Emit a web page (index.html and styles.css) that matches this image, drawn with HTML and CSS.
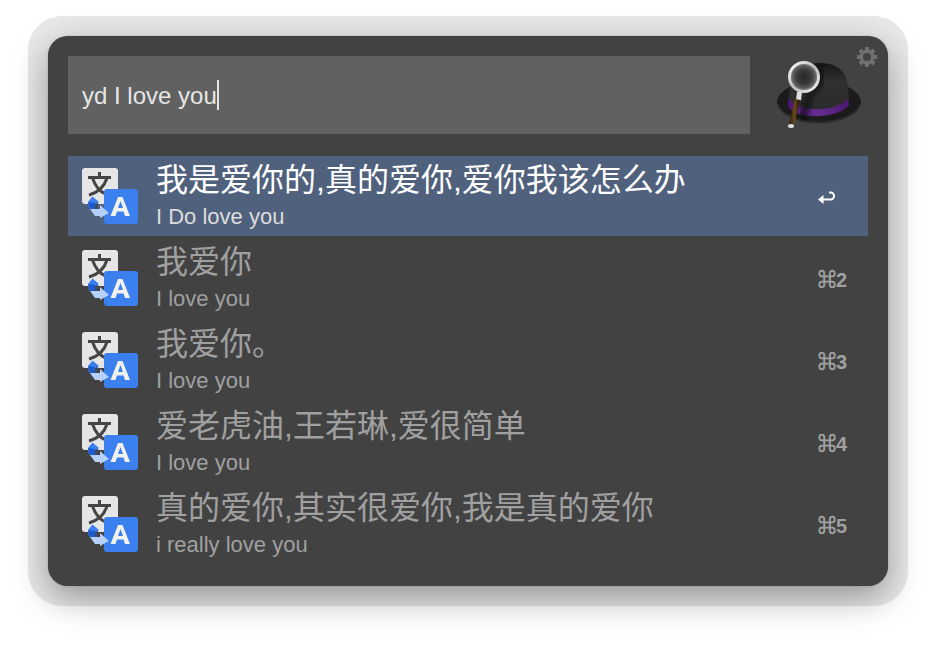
FILE: index.html
```html
<!DOCTYPE html>
<html lang="zh-CN">
<head>
<meta charset="utf-8">
<title>Alfred</title>
<link rel="stylesheet" href="styles.css">
</head>
<body>
<svg class="defs" aria-hidden="true">
  <symbol id="translate" viewBox="0 0 56 56">
    <rect width="36" height="36" rx="3" fill="#e6e6e6"/>
    <path d="M17.500 4v5M6 9.500h23M10.500 10q4 12 13 16M25 10q-4 13-18 17" fill="none" stroke="#454545" stroke-width="3"/>
    <path d="M7 33h9v8h-8z" fill="#414b5c"/>
    <path d="M10.500 28.500L17 34l-3 2-3-1-4 6-1-7z" fill="#3b80ee"/>
    <path d="M6 34l7 1v6H8z" fill="#1b5bd2"/>
    <rect x="22" y="21" width="34" height="35" rx="3" fill="#3b80ee"/>
    <path d="M8 41h10v-4l9 8-9 5v-2h-5z" fill="#b5d0fb"/>
    <path d="M28.500 48l7.500-19h4.500L48 48h-5l-1.500-4.500h-6.500L33.500 48zM36 40h5l-2.500-7z" fill="#f1f1ee" fill-rule="evenodd"/>
  </symbol>
</svg>
<main class="frame">
  <div class="panel">
    <header class="top">
      <label class="search">
        <input class="query" type="text" value="yd I love you" aria-label="Search" spellcheck="false">
        <span class="caret"></span>
      </label>
      <div class="brand">
        <svg class="hat" viewBox="0 2 92 78" aria-hidden="true">
          <defs>
            <linearGradient id="crown" x2="0" y2="1"><stop stop-color="#151515"/><stop offset=".35" stop-color="#303030"/><stop offset="1" stop-color="#2b2b2b"/></linearGradient>
            <linearGradient id="band"><stop stop-color="#4b176f"/><stop offset=".5" stop-color="#652d90"/><stop offset="1" stop-color="#4c1872"/></linearGradient>
            <radialGradient id="glass"><stop stop-color="#292627"/><stop offset=".5" stop-color="#3c393b"/><stop offset="1" stop-color="#777"/></radialGradient>
            <linearGradient id="rim" x2="1" y2="1"><stop stop-color="#fff"/><stop offset=".5" stop-color="#bbb"/><stop offset="1" stop-color="#f5f5f5"/></linearGradient>
            <linearGradient id="wood"><stop stop-color="#27170a"/><stop offset=".5" stop-color="#6b4a18"/><stop offset="1" stop-color="#241306"/></linearGradient>
            <filter id="soft"><feGaussianBlur stdDeviation="2"/></filter>
          </defs>
          <ellipse cx="46" cy="48" rx="42" ry="21" fill="#1b1b1b"/>
          <path d="M5 50c7 24 74 24 82 0" fill="none" stroke="#363636"/>
          <path d="M16 44C16 22 27 9 46 9c20 0 28 10 29 25l1 16c-9 13-53 13-60 0z" fill="url(#crown)"/>
          <path d="M15 44c9 15 50 15 60 0l1 7c-9 14-53 15-61 2z" fill="url(#band)"/>
          <path d="M46 14q7 13-9 26l-8 25" fill="none" stroke="#080808" stroke-width="7" opacity=".7" filter="url(#soft)"/>
          <circle cx="31" cy="23" r="14.500" fill="url(#glass)" stroke="url(#rim)" stroke-width="3"/>
          <circle cx="31" cy="23" r="12.500" fill="none" stroke="#888" opacity=".6"/>
          <path d="M26.500 38l-1 8" stroke="#ddd" stroke-width="5"/>
          <path d="M22 45l5 1-6 25-5-1z" fill="url(#wood)"/>
          <ellipse cx="18" cy="72" rx="3" ry="2" fill="#ddd"/>
        </svg>
        <button class="settings" type="button" aria-label="Preferences">
          <svg viewBox="-10 -10 20 20" width="20" height="20">
            <circle r="5.750" fill="none" stroke="#707070" stroke-width="3.500"/>
            <g fill="none" stroke="#707070" stroke-width="4">
              <path d="M0-10v4M0 6v4M-10 0h4M6 0h4M-7-7l3 3M4 4l3 3M7-7L4-4M-4 4l-3 3"/>
            </g>
          </svg>
        </button>
      </div>
    </header>
    <ul class="results">
      <li><button class="row selected" type="button">
        <svg class="icon"><use href="#translate"/></svg>
        <span class="text"><span class="title">我是爱你的,真的爱你,爱你我该怎么办</span><span class="sub">I Do love you</span></span>
        <span class="key"><svg viewBox="0 0 18 16" width="18" height="16"><path d="M11 2.500h1.500a3.500 3.500 0 0 1 0 7H5" fill="none" stroke="#fff" stroke-width="2"/><path d="M0 9.500L5.500 5v9z" fill="#fff"/></svg></span>
      </button></li>
      <li><button class="row" type="button">
        <svg class="icon"><use href="#translate"/></svg>
        <span class="text"><span class="title">我爱你</span><span class="sub">I love you</span></span>
        <span class="key"><span class="cmd">⌘</span>2</span>
      </button></li>
      <li><button class="row" type="button">
        <svg class="icon"><use href="#translate"/></svg>
        <span class="text"><span class="title">我爱你。</span><span class="sub">I love you</span></span>
        <span class="key"><span class="cmd">⌘</span>3</span>
      </button></li>
      <li><button class="row" type="button">
        <svg class="icon"><use href="#translate"/></svg>
        <span class="text"><span class="title">爱老虎油,王若琳,爱很简单</span><span class="sub">I love you</span></span>
        <span class="key"><span class="cmd">⌘</span>4</span>
      </button></li>
      <li><button class="row" type="button">
        <svg class="icon"><use href="#translate"/></svg>
        <span class="text"><span class="title">真的爱你,其实很爱你,我是真的爱你</span><span class="sub">i really love you</span></span>
        <span class="key"><span class="cmd">⌘</span>5</span>
      </button></li>
    </ul>
  </div>
</main>
</body>
</html>
```
FILE: styles.css
```css
* { box-sizing: border-box; }

body {
  margin: 0;
  padding: 16px 28px 40px;
  background: #fff;
  font-family: "Liberation Sans", "Noto Sans CJK SC", sans-serif;
}

button, input { font: inherit; color: inherit; }

.defs { display: none; }

.frame {
  padding: 20px;
  border-radius: 34px;
  background: rgba(0, 0, 0, 0.09);
}

.panel {
  padding: 20px 20px 22px;
  border-radius: 20px;
  background: #424242;
  box-shadow: 0 0 1px rgba(0, 0, 0, 0.5), 0 12px 34px rgba(0, 0, 0, 0.36);
}

.top {
  display: flex;
  margin-bottom: 22px;
}

.search {
  display: flex;
  flex: 1;
  align-items: center;
  min-width: 0;
  height: 78px;
  padding: 0 14px;
  background: #616161;
  color: #e6e6e6;
  font-size: 24px;
}

.query {
  field-sizing: content;
  height: 30px;
  padding: 2px 0 0;
  border: 0;
  outline: 0;
  background: none;
}

.caret {
  width: 2px;
  height: 30px;
  background: #e6e6e6;
}

.brand {
  position: relative;
  width: 118px;
}

.hat {
  display: block;
  width: 92px;
  height: 78px;
  margin-left: 23px;
}

.settings {
  position: absolute;
  top: -9px;
  right: -9px;
  width: 20px;
  height: 20px;
  padding: 0;
  border: 0;
  background: none;
}

.settings svg { display: block; }

.results {
  display: grid;
  gap: 2px;
  margin: 0;
  padding: 0;
  list-style: none;
}

.row {
  display: flex;
  align-items: center;
  width: 100%;
  height: 80px;
  padding: 0 20px 0 14px;
  border: 0;
  background: none;
  color: #a0a0a0;
  text-align: left;
}

.selected {
  background: #50617d;
  color: #fff;
}

.icon {
  flex: none;
  width: 56px;
  height: 56px;
  margin-right: 18px;
}

.text {
  display: grid;
  flex: 1;
  min-width: 0;
  padding-bottom: 3px;
}

.title {
  font-size: 32px;
  line-height: 44px;
}

.sub {
  font-size: 22px;
  line-height: 30px;
}

.selected .sub { color: #dcdcdc; }

.key {
  display: flex;
  flex: none;
  align-items: center;
  width: 30px;
  padding-top: 4px;
  font-size: 20px;
  font-weight: bold;
  line-height: 24px;
}

.cmd {
  font-size: 18px;
  -webkit-text-stroke: 1px currentColor;
}
```
